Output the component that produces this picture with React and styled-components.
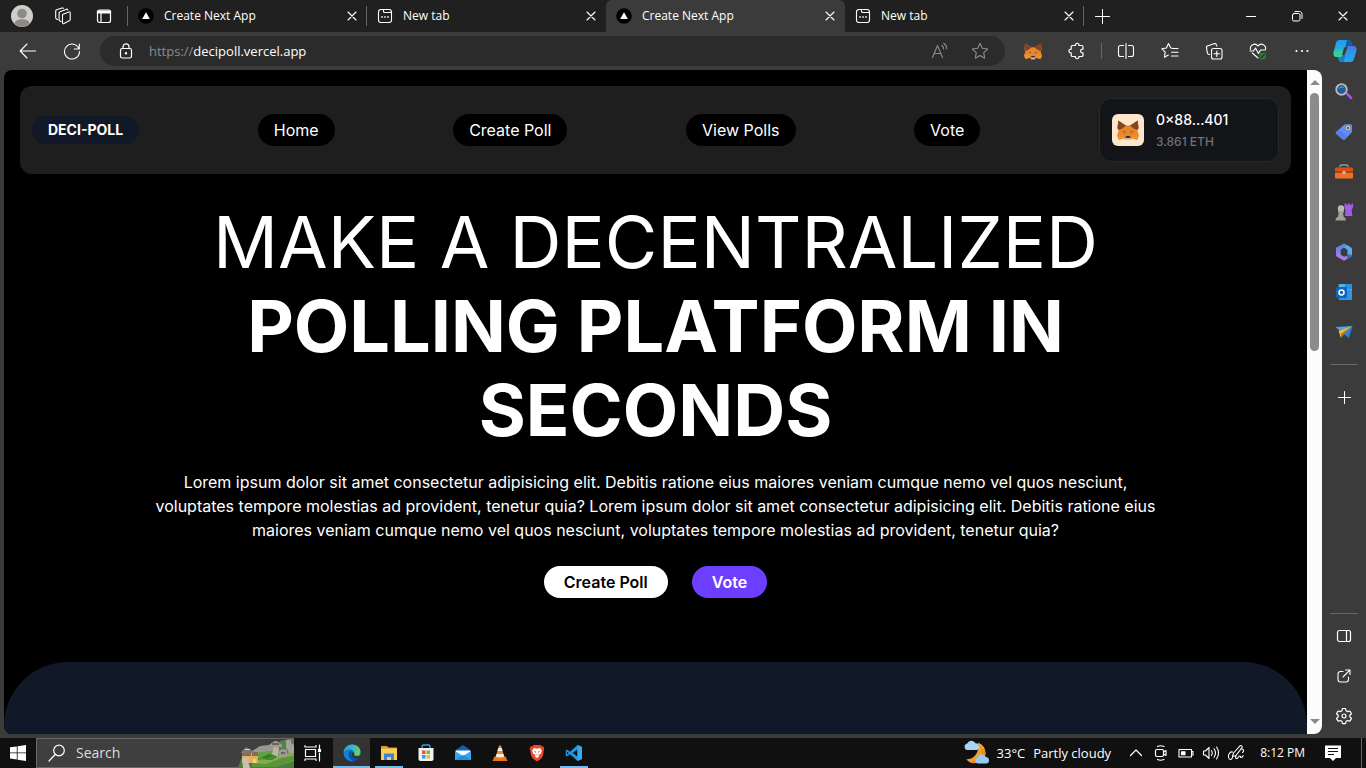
import React, { useState } from 'react';
import styled, { createGlobalStyle } from 'styled-components';

const GlobalStyle = createGlobalStyle`
  *, *::before, *::after {
    box-sizing: border-box;
  }
  body {
    margin: 0;
    background-color: #3b3b3b;
    font-family: 'Open Sans', 'Noto Sans', sans-serif;
    color: #ffffff;
  }
  button, input {
    font-family: inherit;
    color: inherit;
    border: none;
    padding: 0;
    background: none;
  }
  button {
    cursor: pointer;
  }
  a {
    color: inherit;
    text-decoration: none;
  }
  svg {
    display: block;
    flex: none;
  }
`;

/* ---------- icons ---------- */

const Line = ({ size = 16, width = 1, children }) => (
  <svg
    width={size}
    height={size}
    viewBox={`0 0 ${size} ${size}`}
    fill="none"
    stroke="currentColor"
    strokeWidth={width}
    strokeLinecap="round"
    strokeLinejoin="round"
    aria-hidden="true"
  >
    {children}
  </svg>
);

const Art = ({ size = 16, box = size, children }) => (
  <svg width={size} height={size} viewBox={`0 0 ${box} ${box}`} aria-hidden="true">
    {children}
  </svg>
);

const AvatarIcon = () => (
  <Art size={22}>
    <circle cx="11" cy="11" r="11" fill="#d0cecb" />
    <circle cx="11" cy="8.5" r="4.8" fill="#8c8987" />
    <path d="M3.5 18.5c.6-3 3.5-4.3 7.5-4.3s6.9 1.3 7.5 4.3A11 11 0 0 1 11 22a11 11 0 0 1-7.500-3.500z" fill="#8c8987" />
  </Art>
);

const WorkspacesIcon = () => (
  <Line size={18} width={1.1}>
    <path d="M8.500 7.400l6.300-2.500c.8-.3 1.400 0 1.400.9v6.700c0 .6-.3 1-.9 1.300l-5.300 2.800c-.8.400-1.500 0-1.500-.9z" />
    <path d="M7 14.600l-1.200-.6c-.5-.2-.7-.6-.7-1.200V5.900c0-.6.3-1 .9-1.200l6.500-2.500c.6-.2 1.100 0 1.300.7" />
    <path d="M3.600 12.500l-1.200-.6c-.5-.2-.7-.6-.7-1.200V3.900c0-.6.3-1 .9-1.200L8 .9c.6-.2 1.100 0 1.300.6" />
  </Line>
);

const TabActionsIcon = () => (
  <Line size={16} width={1.2}>
    <rect x="1.5" y="2" width="13" height="12.5" rx="2" />
    <path d="M1.500 3h13v2h-13z" fill="currentColor" />
    <path d="M5 5v9" />
  </Line>
);

const NextIcon = () => (
  <Art size={16}>
    <circle cx="8" cy="8" r="7.8" fill="#000" />
    <path d="M8 4.300l3.800 6.700H4.200z" fill="#fff" />
  </Art>
);

const NewTabIcon = () => (
  <Line size={16} width={1.1}>
    <rect x="1.500" y="1.500" width="13" height="13" rx="2.500" />
    <path d="M6.500 1.800v1.400c0 .8.500 1.300 1.300 1.300h6.500" />
    <path d="M4.200 9h1.600M7.200 9h1.600M10.200 9h1.600" strokeWidth="1.700" strokeLinecap="butt" />
  </Line>
);

const CloseIcon = () => (
  <Line size={10} width={1.1}>
    <path d="M1 1l8 8M9 1l-8 8" />
  </Line>
);

const PlusIcon = ({ size = 15 }) => (
  <Line size={size}>
    <path d={`M${size / 2} .5v${size - 1}M.5 ${size / 2}h${size - 1}`} />
  </Line>
);

const BackIcon = () => (
  <Line size={18} width={1.1}>
    <path d="M16.500 9H1.500M8 2L1.200 9 8 16" />
  </Line>
);

const RefreshIcon = () => (
  <Line size={18} width={1.1}>
    <path d="M16 6.800A7.500 7.500 0 1 0 16.500 9.500M16.300 2v5h-5" />
  </Line>
);

const LockIcon = () => (
  <Line size={16} width={1.2}>
    <rect x="2.500" y="5.500" width="11" height="9.500" rx="1.800" />
    <path d="M5 5.500V3.800a3 3 0 0 1 6 0v1.700" />
    <circle cx="8" cy="10.300" r=".6" fill="currentColor" />
  </Line>
);

const ReadAloudIcon = () => (
  <Line size={18} width={1.1}>
    <path d="M1.500 15.500l5-12 5 12M3.300 11.500h6.400" />
    <path d="M10.800 3.500c1.200.9 1.900 2 1.900 3.500M12.700 1.300c1.900 1.300 3 3.200 3 5.500" />
  </Line>
);

const StarIcon = () => (
  <Line size={18} width={1.1}>
    <path d="M9 1.300l2.300 5 5.400.7-4 3.700 1 5.500L9 13.600l-4.700 2.600 1-5.500-4-3.700 5.400-.7z" />
  </Line>
);

const FavoritesIcon = () => (
  <Line size={18} width={1.1}>
    <path d="M11 6.200L9.800 6 7.500 1.500 5.400 6l-4.600.7 3.400 3.400-.8 5.200 4-2.300" />
    <path d="M11.500 6.500H17M10.500 10.200H17M10.500 14H17" />
  </Line>
);

const FoxIcon = ({ size = 18 }) => (
  <Art size={size} box={24}>
    <path d="M1.500 1.500L9.500 7h5l8-5.500 1 8.500-1.300 3L24 18l-2 4.500-6-1.500-1.500 2h-5L8 21l-6 1.500L0 18l1.800-5L.500 10z" fill="#e8862c" />
    <path d="M1.500 1.500L10 7.300 5.500 10.500 1.800 12 .400 9.500zM22.500 1.500L14 7.300l4.500 3.200 3.700 1.500 1.400-2.500z" fill="#854520" />
    <path d="M5.500 13.300l4 .2-.8 1.600zM18.500 13.300l-4 .2.800 1.600z" fill="#6b4a38" />
    <path d="M0 18l7-.5L8 21l-6 1.500zM24 18l-7-.5-1 3.500 6 1.500z" fill="#f3912c" />
    <path d="M9 20h6l-.6 3H9.600z" fill="#cfc4ba" />
    <path d="M9.800 18.600h4.400l.4 2.200H9.400z" fill="#2d2f38" />
  </Art>
);

const PuzzleIcon = () => (
  <Line size={18} width={1.2}>
    <path d="M4.500 3.500H7.500c-.6-3 4-3 3.400 0h2.800c.8 0 1.300.5 1.300 1.300v2.400c-3.300-.4-3.300 4 0 3.600v2.400c0 .8-.5 1.300-1.300 1.300h-2.800c.6 3-4 3-3.400 0h-3c-.8 0-1.300-.5-1.300-1.300v-2.400c-3 .300-3-3.900 0-3.600V4.800c0-.8.5-1.300 1.300-1.300z" />
  </Line>
);

const SplitIcon = () => (
  <Line size={18} width={1.1}>
    <path d="M9 1.500v15M6.500 3.500H3.500c-1.100 0-2 .9-2 2v7c0 1.100.9 2 2 2h3M11.500 3.500h3c1.100 0 2 .9 2 2v7c0 1.100-.9 2-2 2h-3" />
  </Line>
);

const CollectionsIcon = () => (
  <Line size={18} width={1.1}>
    <rect x="6.500" y="6.500" width="10.500" height="10.500" rx="2" />
    <path d="M11.800 9v5.500M9 11.800h5.500" />
    <path d="M4.500 12.500l-1-.3c-.8-.2-1.200-.8-1.200-1.600l-.8-5c-.2-.9.200-1.500 1-1.700l7-2.300c.9-.2 1.500.1 1.700.9l.6 1.500" />
  </Line>
);

const HealthIcon = () => (
  <Line size={18} width={1.1}>
    <path d="M1.500 7.500C.5 3 6 .2 9 4c3-3.800 8.500-1 7.500 3.500M3.300 11l5.700 5M1 9h3.500l2-3 3 5.500 2-3.500H16" />
    <rect x="10.500" y="11" width="6.500" height="6.500" rx="2" fill="#2b7a35" stroke="none" />
    <path d="M12.300 15.500l3-2.800" stroke="#123c18" />
  </Line>
);

const MoreIcon = () => (
  <Art size={16}>
    <g fill="#fff">
      <circle cx="2.5" cy="8" r="1.1" />
      <circle cx="8" cy="8" r="1.1" />
      <circle cx="13.5" cy="8" r="1.1" />
    </g>
  </Art>
);

const CopilotIcon = () => (
  <Art size={24}>
    <defs>
      <linearGradient id="cpLeft" x1="0" y1="0" x2="0" y2="1">
        <stop offset="0" stopColor="#1e9bea" />
        <stop offset=".45" stopColor="#25a9e8" />
        <stop offset=".75" stopColor="#35cfa0" />
        <stop offset="1" stopColor="#35d08b" />
      </linearGradient>
      <linearGradient id="cpRight" x1="0" y1="0" x2="0" y2="1">
        <stop offset="0" stopColor="#4a73e8" />
        <stop offset=".4" stopColor="#2f95ec" />
        <stop offset="1" stopColor="#22a7ee" />
      </linearGradient>
    </defs>
    <path d="M6.500 1h9c2 0 2.600 1.300 3.200 3.500L19.300 7H13L9 18H3.500C.8 18 0 15.500.6 13L3 4c.6-2 1.600-3 3.500-3z" fill="url(#cpLeft)" />
    <path d="M14 1h1.500c2 0 2.600 1.300 3.200 3.500L19.300 7H12.500z" fill="#075ea8" />
    <path d="M17.500 23h-9c-2 0-2.600-1.300-3.200-3.500L4.700 18H10l4.500-11h6c2.700 0 3.500 2.500 2.900 5L21 20c-.6 2-1.600 3-3.500 3z" fill="url(#cpRight)" />
    <path d="M4.700 18H10l1.500-4 1 3-2 6h-2c-2 0-2.600-1.300-3.200-3.500z" fill="#1180d0" />
    <path d="M11 8.500h3.500L11.500 16H9.200z" fill="#3b3b3b" />
  </Art>
);

const MinimizeIcon = () => (
  <Line size={10}>
    <path d="M0 5.500h10" />
  </Line>
);

const RestoreIcon = () => (
  <Line size={12}>
    <rect x="1.500" y="3.500" width="7.500" height="7.500" rx="1.500" />
    <path d="M4 1.500h4.500c1.400 0 2.500 1.100 2.500 2.500v4.500" />
  </Line>
);

const SearchArt = () => (
  <Art size={18}>
    <path d="M10.800 11.200l1.600-1.600 4.800 4.700c.8.800-.8 2.700-1.800 1.800z" fill="#a855f0" />
    <circle cx="6.500" cy="6.500" r="5.300" fill="#225d96" stroke="#b9b9b9" strokeWidth="1.800" />
    <path d="M4 5.500c1-1.500 3-1.800 4.500-1" stroke="#6ea8da" fill="none" />
  </Art>
);

const TagArt = () => (
  <Art size={18}>
    <path d="M9.500 1.500l5.500-.5c1.200 0 2 .8 2 2v6l-7 7.400c-.7.700-1.600.7-2.300 0L1.200 11c-.7-.7-.7-1.600 0-2.300z" fill="#5f8df5" />
    <path d="M1.200 11l6.500 5.400c.7.700 1.600.7 2.300 0L12 14 4 7z" fill="#4c70e6" opacity=".5" />
    <circle cx="13" cy="5" r="1.700" fill="#454a60" stroke="#f3c04a" strokeWidth="1.200" />
  </Art>
);

const ToolboxArt = () => (
  <Art size={18}>
    <path d="M5 4.500V3.300c0-.8.500-1.300 1.300-1.300h5.400c.8 0 1.300.5 1.300 1.300v1.200" fill="none" stroke="#9a9a9a" strokeWidth="1.300" />
    <rect x="0" y="4.500" width="18" height="4.500" rx="1" fill="#d9520c" />
    <rect x="0" y="9" width="18" height="6.500" rx="1" fill="#f0702a" />
    <rect x="0" y="8.500" width="18" height="1.200" fill="#8f3608" />
    <circle cx="9" cy="9.500" r="1.800" fill="#bdbdbd" />
  </Art>
);

const GamesArt = () => (
  <Art size={20}>
    <path d="M10.500 1.500h2V3H14V1.500h2V3h1.500V1.500H19v4.500l-1.500 1.500.8 6.500H11l.5-6.500-1-1.500z" fill="#a45be8" />
    <circle cx="7" cy="6.500" r="3.200" fill="#bcb9b5" />
    <path d="M4 9h6v1.500H8.900l.9 4.500c1.200.4 2 1.300 2 3.500H1.500c0-2.200.8-3.100 2.300-3.500l1-4.500H4z" fill="#a3a09c" />
  </Art>
);

const OfficeArt = () => (
  <Art size={18}>
    <path d="M9 .5l3.500 1.800V6L9 4.500 5.500 7v4.500L2 13.500 1 12V6c0-.8.300-1.300 1-1.700z" fill="#5a8be4" />
    <path d="M1 12c0 .8.300 1.300 1 1.700L8 17.200c.7.400 1.300.4 2 0l2.500-1.500-1-3L9 13.800l-3.500-2.300L3 8.500z" fill="#a67ce6" />
    <path d="M12.500 2.300L16 4.400c.7.400 1 .9 1 1.700v6c0 .8-.3 1.300-1 1.700l-3.500 2V7L9 4.500z" fill="#57aeea" />
    <path d="M12.500 11v4.700L16 13.600c.7-.4 1-.9 1-1.700z" fill="#2c6ec4" />
    <path d="M1 6c0-.8.300-1.300 1-1.700l3.500 2.500v4.700L1 9z" fill="#8d7be0" />
  </Art>
);

const OutlookArt = () => (
  <Art size={18}>
    <rect x="3.500" y="1" width="13.500" height="8" rx="1" fill="#53b1ee" />
    <rect x="10" y="1" width="7" height="5" fill="#2a90dd" />
    <path d="M3 8.500L17 6.500V16c0 .6-.4 1-1 1H4z" fill="#2f95e4" />
    <rect x="1" y="4" width="11" height="11" rx="1.500" fill="#0a67bd" />
    <circle cx="6.5" cy="9.500" r="2.500" fill="none" stroke="#fff" strokeWidth="1.500" />
  </Art>
);

const DropArt = () => (
  <Art size={18}>
    <path d="M.5 4L17.500 3 7.500 10z" fill="#45a4ea" />
    <path d="M7.500 10l10-7-3.500 12z" fill="#2583d8" />
    <path d="M3.500 8l14-5L6 11v4z" fill="#f6b73c" />
    <path d="M6 11l11.500-8L8.500 12 6 15z" fill="#b97a22" />
  </Art>
);

const PanelIcon = () => (
  <Line size={16} width={1.2}>
    <rect x="1.500" y="2.500" width="13" height="11" rx="2" />
    <path d="M10.500 2.500v11" />
  </Line>
);

const ExternalIcon = () => (
  <Line size={16} width={1.1}>
    <path d="M7 3.500H4.500C3 3.500 2 4.500 2 6v5.500C2 13 3 14 4.500 14H10c1.500 0 2.500-1 2.500-2.500V9M9.500 2H14v4.500M13.800 2.200L7 9" />
  </Line>
);

const GearIcon = () => (
  <Line size={18} width={1.2}>
    <path d="M7.500 1.500h3l.6 2.300 1.500.8 2.300-.6 1.600 2.700-1.700 1.600v1.500l1.700 1.600-1.600 2.700-2.300-.6-1.500.8-.6 2.300h-3l-.6-2.300-1.500-.8-2.300.6-1.600-2.700 1.700-1.600V8.300L1.500 6.700 3.100 4l2.300.6 1.500-.8z" />
    <circle cx="9" cy="9" r="2" />
  </Line>
);

const WindowsIcon = () => (
  <Art size={16}>
    <path d="M0 2.300L6.800 1.400v6.100H0zM7.600 1.300L16 0v7.500H7.600zM0 8.300h6.800v6.200L0 13.600zM7.600 8.300H16V16l-8.400-1.300z" fill="#fff" />
  </Art>
);

const LoupeIcon = () => (
  <Line size={18} width={1.2}>
    <circle cx="11" cy="6.500" r="5.300" />
    <path d="M7.200 10.500L1 17" />
  </Line>
);

const GreatWallArt = () => (
  <svg width="56" height="29" viewBox="0 0 56 29" aria-hidden="true">
    <path d="M0 29l3-9 7-7 10-2 12-3 10-5 14-3v29z" fill="#4d7d3c" />
    <path d="M14 12l8-5 9-1 6-4 5 2v6l-12 3-14 3z" fill="#9a9790" />
    <path d="M42 2l8-2h6v12l-8 4-8-4z" fill="#55824a" />
    <path d="M18 14l12-2 12 1-8 6-12 3z" fill="#5fa33c" />
    <path d="M20 21l14 0 10-6 12-2v9l-16 5H16z" fill="#7fae4a" />
    <path d="M14 24l14 1 16-6 12-2v4L38 28H14z" fill="#5c9438" />
    <path d="M36 7l-2 8 6 3 1-9z" fill="#bdb5a4" />
    <path d="M48 1h5v3l3 2v8h-5l-3-6z" fill="#a8a299" />
    <path d="M4 14h16v10H4z" fill="#e2b166" />
    <path d="M4 14h9v3H4zM14 13h6v4h-6z" fill="#8d6a4a" />
    <path d="M3 13l5-5 7 4v2H3z" fill="#7d756e" />
    <path d="M32 6c2-3 5-4 7-4l5 4v2H32zM41 12c2-2 6-2 8-1v7h-8z" fill="#a09a91" />
    <path d="M34 4h7v2h-7zM43 13h4v2h-4z" fill="#6d655d" />
    <path d="M4 18h5l3 11H5z" fill="#c6bfb2" />
    <path d="M15 20h3v4h-3zM7 10h5v1H7z" fill="#f5cf85" />
    <path d="M22 19l9-4 6 2-8 3z" fill="#3d7a2d" />
  </svg>
);

const TaskViewIcon = () => (
  <Line size={18} width={1.2}>
    <path d="M1 1.500V3h11V1.500M1 16.500V15h11v1.500M1.500 5.500h10v7h-10zM15.500 1v4M15.500 9v8" />
    <rect x="14.500" y="5.500" width="2" height="2" fill="currentColor" />
  </Line>
);

const EdgeArt = () => (
  <Art size={18}>
    <defs>
      <linearGradient id="edgeTop" x1="0" y1="0" x2="1" y2=".4">
        <stop offset="0" stopColor="#1b9de2" />
        <stop offset=".5" stopColor="#37b6c8" />
        <stop offset="1" stopColor="#63cf68" />
      </linearGradient>
    </defs>
    <circle cx="9" cy="9" r="8.500" fill="#1480d2" />
    <path d="M.6 8.500C1 3.500 4.600.5 9 .5c5 0 8.500 3.500 8.500 7.300 0 2.400-1.700 3.900-4 3.900-1.900 0-2.900-.8-2.500-1.800.8-2-.7-4.600-4.200-4.600-2.800 0-5.100 1.300-6.200 3.200z" fill="url(#edgeTop)" />
    <path d="M6.800 7C4.500 10 6 16 11 17.200c2.500-.5 4.500-1.900 5.600-4-3 1.600-7.900.6-8.200-2.900-.1-1.400.3-2.300 1-2.800-.6-.8-1.600-1-2.600-.5z" fill="#0c4f9c" />
    <path d="M9.800 8.200c1.400-.2 2 1 1.300 2-.4 1 .6 1.700 2.200 1.700l4 .3-.8 1.600c-2.500 1-7.500.6-7.900-3.600 0-1 .5-1.800 1.200-2z" fill="#333" />
  </Art>
);

const FolderArt = () => (
  <Art size={18}>
    <path d="M1 2h6l1.500 1.500H17V8H1z" fill="#d99c1e" />
    <path d="M1 4.500h16V16H1z" fill="#fbcd52" />
    <path d="M4 9.500h10V16h-3v-3H7v3H4z" fill="#3b86d1" />
  </Art>
);

const StoreArt = () => (
  <Art size={18}>
    <path d="M5 4V2.500C5 1.600 5.600 1 6.500 1h5c.9 0 1.500.6 1.500 1.500V4" fill="none" stroke="#2fa3e8" strokeWidth="1.400" />
    <path d="M1.500 4h15v11c0 1.200-.8 2-2 2h-11c-1.200 0-2-.8-2-2z" fill="#f1f1f1" />
    <path d="M5 6.500h3.500V10H5z" fill="#ef5a2a" />
    <path d="M9.500 6.500H13V10H9.500z" fill="#7fb928" />
    <path d="M5 11h3.500v3.500H5z" fill="#2a9fe8" />
    <path d="M9.500 11H13v3.500H9.500z" fill="#f9b81b" />
  </Art>
);

const MailArt = () => (
  <Art size={18}>
    <path d="M1 6.500l8-5.500 8 5.500V9H1z" fill="#1360ad" />
    <path d="M2 6.500h14v3L9 13 2 9.500z" fill="#fff" />
    <path d="M1 7l8 5 8-5v9H1z" fill="#2fa8f0" />
    <path d="M1 16l8-5 8 5z" fill="#1f8fe0" />
  </Art>
);

const VlcArt = () => (
  <Art size={18}>
    <path d="M3.500 12.500h11L16.500 17h-15z" fill="#e87817" />
    <path d="M8 1.500h2l3.500 12c-2 1.500-7 1.500-9 0z" fill="#f08a24" />
    <path d="M7.300 4h3.400l.9 3H6.400zM5.500 10h7l.7 2.500c-2 1.200-6.400 1.200-8.400 0z" fill="#ececec" />
  </Art>
);

const BraveArt = () => (
  <Art size={18}>
    <path d="M5.500 1h7l1.500 1.500h1.500L16.300 5l-.6 1.200c0 4-1.200 7-3.200 8.800L9 17.500 5.500 15c-2-1.800-3.200-4.800-3.200-8.800L1.700 5l.8-2.500H4z" fill="#f0492a" />
    <path d="M6 4l3 .7L12 4l1.800 2.500-.8 3-2.500 1.500.5 1.500L9 14l-2-1.500.5-1.500L5 9.500l-.8-3z" fill="#fff" />
    <path d="M5.800 7l2.200.6-.4 1.300zM12.200 7l-2.200.6.4 1.300zM8.200 10.500h1.600L9 11.800z" fill="#f0492a" />
  </Art>
);

const VsCodeArt = () => (
  <Art size={18}>
    <path d="M12.500 1L17 3v12l-4.500 2L5 10.200 2 12.500.8 11.700V6.300L2 5.500l3 2.300zM12.500 5.500L7.700 9l4.800 3.500zM2 7.500v3L3.600 9z" fill="#1f94e0" fillRule="evenodd" />
    <path d="M12.500 1L17 3v12l-4.500 2z" fill="#35a9f2" />
  </Art>
);

const WeatherArt = () => (
  <Art size={26}>
    <path d="M15 2.500A12 12 0 0 1 22.500 14 11 11 0 0 1 3 19c7 1.500 14-6 12-16.500z" fill="#f2a02c" />
    <path d="M18 8c2 6-3 13-12 13.500A11 11 0 0 0 22.500 14c.3-2-1-4.500-4.500-6z" fill="#ee8a20" />
    <path d="M4.500 10a3.300 3.300 0 0 1-.3-6.500 4.500 4.500 0 0 1 8.300-.2 3.400 3.400 0 0 1 1 6.700z" fill="#a9d4f5" />
    <path d="M15 23.500a3.200 3.200 0 0 1-.3-6.300 4.400 4.400 0 0 1 8.200-.2 3.300 3.300 0 0 1 .6 6.500z" fill="#98c9f1" />
  </Art>
);

const ChevronIcon = () => (
  <Line size={14} width={1.2}>
    <path d="M1.500 9.500L7 4l5.500 5.500" />
  </Line>
);

const MeetIcon = () => (
  <Line size={16} width={1.2}>
    <rect x="2.500" y="4.500" width="8" height="7" rx="1.500" />
    <path d="M10.500 7l2.500-1.500v5L10.500 9M4.500 1.500C6 .7 9 .7 11 1.500M4.500 14.500c1.500.8 4.500.8 6.500 0" />
  </Line>
);

const BatteryIcon = () => (
  <Line size={16} width={1.1}>
    <path d="M1 4.500h12.500v7.500H1zM13.500 6.500H15V10h-1.500" />
    <path d="M3.500 6.800H7V9.800H3.500z" fill="currentColor" />
  </Line>
);

const SpeakerIcon = () => (
  <Line size={18} width={1.1}>
    <path d="M1.500 7h2L7 3.500v11L3.500 11h-2zM9.500 6.500c1 1.500 1 3.500 0 5M12 4.800c1.800 2.500 1.800 5.900 0 8.400M14.500 3c2.700 3.500 2.700 8.500 0 12" />
  </Line>
);

const PenIcon = () => (
  <Line size={18} width={1.1}>
    <path d="M5.500 12.500l1-3.500L13 1.800c1-.8 2.700.6 2 1.800L9 11.500l-3.500 1zM5.500 8c-2-.5-4.500 2-4 5s3 3.500 4 .5M9 12c-1.500 3 1 3.500 2.500 1 1-1.800 2-1 2 .2 1 .5 2-.2 2.700-1.500M15 5c2 0 2 2 .5 3.500" />
  </Line>
);

const NoticeIcon = () => (
  <Art size={18}>
    <path d="M1 1.500h16v12.500h-5L9 17l-3-3H1z" fill="#fff" />
    <path d="M4 4.500h10M4 7.500h10M4 10.500h6" stroke="#101010" />
  </Art>
);

/* ---------- data ---------- */

const tabs = [
  { title: 'Create Next App', icon: NextIcon },
  { title: 'New tab', icon: NewTabIcon },
  { title: 'Create Next App', icon: NextIcon },
  { title: 'New tab', icon: NewTabIcon },
];

const toolbarItems = [
  { name: 'Split screen', icon: SplitIcon },
  { name: 'Favorites', icon: FavoritesIcon },
  { name: 'Collections', icon: CollectionsIcon },
  { name: 'Browser essentials', icon: HealthIcon },
  { name: 'Settings and more', icon: MoreIcon },
];

const sidebarItems = [
  { name: 'Search sidebar', icon: SearchArt },
  { name: 'Shopping', icon: TagArt },
  { name: 'Tools', icon: ToolboxArt },
  { name: 'Games', icon: GamesArt },
  { name: 'Microsoft 365', icon: OfficeArt },
  { name: 'Outlook', icon: OutlookArt },
  { name: 'Drop', icon: DropArt },
];

const sidebarFooter = [
  { name: 'Hide sidebar', icon: PanelIcon },
  { name: 'Open in window', icon: ExternalIcon },
  { name: 'Settings', icon: GearIcon },
];

const navLinks = ['Home', 'Create Poll', 'View Polls', 'Vote'];

const taskbarApps = [
  { name: 'Edge', icon: EdgeArt, active: true, open: true },
  { name: 'File Explorer', icon: FolderArt, open: true },
  { name: 'Store', icon: StoreArt },
  { name: 'Mail', icon: MailArt },
  { name: 'VLC', icon: VlcArt },
  { name: 'Brave', icon: BraveArt },
  { name: 'VS Code', icon: VsCodeArt, open: true },
];

const trayItems = [
  { name: 'Show hidden icons', icon: ChevronIcon },
  { name: 'Meet now', icon: MeetIcon },
  { name: 'Battery', icon: BatteryIcon },
  { name: 'Volume', icon: SpeakerIcon },
  { name: 'Ink workspace', icon: PenIcon },
];

/* ---------- app ---------- */

function App() {
  const [activeTab, setActiveTab] = useState(2);
  const [url, setUrl] = useState('decipoll.vercel.app');

  return (
    <Window>
      <GlobalStyle />

      {/* tab strip */}
      <TabStrip>
        <StripActions>
          <StripButton aria-label="Profile"><AvatarIcon /></StripButton>
          <StripButton aria-label="Workspaces"><WorkspacesIcon /></StripButton>
          <StripButton aria-label="Tab actions"><TabActionsIcon /></StripButton>
        </StripActions>
        {tabs.map(({ title, icon: Icon }, idx) => (
          <Tab key={idx} $active={idx === activeTab} $divider={idx !== activeTab && idx + 1 !== activeTab}>
            <TabButton onClick={() => setActiveTab(idx)}>
              <Icon />
              <span>{title}</span>
            </TabButton>
            <TabClose aria-label="Close tab"><CloseIcon /></TabClose>
          </Tab>
        ))}
        <IconButton $width={36} aria-label="Open new tab"><PlusIcon /></IconButton>
        <WindowControls>
          <IconButton $width={46} aria-label="Minimize"><MinimizeIcon /></IconButton>
          <IconButton $width={46} aria-label="Restore"><RestoreIcon /></IconButton>
          <IconButton $width={46} aria-label="Close"><CloseIcon /></IconButton>
        </WindowControls>
      </TabStrip>

      {/* toolbar */}
      <Toolbar>
        <ToolbarStart>
          <IconButton $width={44} aria-label="Back"><BackIcon /></IconButton>
          <IconButton $width={44} aria-label="Refresh"><RefreshIcon /></IconButton>
        </ToolbarStart>
        <AddressBar>
          <LockIcon />
          <UrlLabel>
            <span>https://</span>
            <UrlInput aria-label="Address" value={url} onChange={(e) => setUrl(e.target.value)} />
          </UrlLabel>
          <IconButton $width={40} $muted aria-label="Read aloud"><ReadAloudIcon /></IconButton>
          <IconButton $width={40} $muted aria-label="Add to favorites"><StarIcon /></IconButton>
        </AddressBar>
        <IconButton $width={44} aria-label="MetaMask"><FoxIcon /></IconButton>
        <IconButton $width={44} aria-label="Extensions"><PuzzleIcon /></IconButton>
        <ToolbarDivider />
        {toolbarItems.map(({ name, icon: Icon }) => (
          <IconButton key={name} $width={44} aria-label={name}><Icon /></IconButton>
        ))}
        <IconButton $width={42} aria-label="Copilot"><CopilotIcon /></IconButton>
      </Toolbar>

      <Body>
        <Frame>
          <Page>
            {/* header */}
            <Nav>
              <Brand href="#home">DECI-POLL</Brand>
              {navLinks.map((link) => (
                <NavLink key={link} href="#page">{link}</NavLink>
              ))}
              <Wallet>
                <WalletIcon><FoxIcon size={22} /></WalletIcon>
                <WalletText>
                  <WalletAddress>0×88...401</WalletAddress>
                  <WalletBalance>3.861 ETH</WalletBalance>
                </WalletText>
              </Wallet>
            </Nav>

            {/* hero */}
            <Hero>
              <Title>
                <span>MAKE A DECENTRALIZED</span> POLLING PLATFORM IN SECONDS
              </Title>
              <Intro>
                Lorem ipsum dolor sit amet consectetur adipisicing elit. Debitis ratione eius maiores
                veniam cumque nemo vel quos nesciunt, voluptates tempore molestias ad provident, tenetur
                quia? Lorem ipsum dolor sit amet consectetur adipisicing elit. Debitis ratione eius
                maiores veniam cumque nemo vel quos nesciunt, voluptates tempore molestias ad provident,
                tenetur quia?
              </Intro>
              <Actions>
                <ActionButton>Create Poll</ActionButton>
                <ActionButton $primary>Vote</ActionButton>
              </Actions>
            </Hero>
            <Panel />
          </Page>
          <Scrollbar>
            <Arrow />
            <Thumb />
            <Arrow $down />
          </Scrollbar>
        </Frame>

        {/* browser sidebar */}
        <Sidebar>
          {sidebarItems.map(({ name, icon: Icon }) => (
            <SideButton key={name} aria-label={name}><Icon /></SideButton>
          ))}
          <SideDivider />
          <SideButton aria-label="Customize"><PlusIcon size={13} /></SideButton>
          <SideFooter>
            <SideRule />
            {sidebarFooter.map(({ name, icon: Icon }) => (
              <SideButton key={name} aria-label={name}><Icon /></SideButton>
            ))}
          </SideFooter>
        </Sidebar>
      </Body>

      {/* taskbar */}
      <Taskbar>
        <IconButton $width={36} aria-label="Start"><WindowsIcon /></IconButton>
        <SearchBox>
          <LoupeIcon />
          <SearchInput aria-label="Search" placeholder="Search" />
          <GreatWallArt />
        </SearchBox>
        <AppButton aria-label="Task view"><TaskViewIcon /></AppButton>
        <Apps>
          {taskbarApps.map(({ name, icon: Icon, active, open }) => (
            <AppButton key={name} aria-label={name} $active={active} $open={open}><Icon /></AppButton>
          ))}
        </Apps>
        <Tray>
          <Weather>
            <WeatherArt />
            <span>33°C</span>
            <span>Partly cloudy</span>
          </Weather>
          {trayItems.map(({ name, icon: Icon }) => (
            <IconButton key={name} $width={25} aria-label={name}><Icon /></IconButton>
          ))}
          <Clock>8:12 PM</Clock>
          <IconButton $width={56} aria-label="Notifications"><NoticeIcon /></IconButton>
        </Tray>
      </Taskbar>
    </Window>
  );
}

const Window = styled.div`
  display: flex;
  flex-direction: column;
  height: 100vh;
  overflow: hidden;
  background-color: #3b3b3b;
`;

const IconButton = styled.button`
  display: flex;
  flex: none;
  align-items: center;
  justify-content: center;
  width: ${(props) => props.$width}px;
  height: 100%;
  color: ${(props) => (props.$muted ? '#8c8c8c' : '#ffffff')};
`;

//tab strip
const TabStrip = styled.div`
  display: flex;
  flex: none;
  height: 32px;
  background-color: #202020;
`;

const StripActions = styled.div`
  display: flex;
  align-items: center;
  flex: none;
  width: 128px;
  padding-left: 1px;
  background: linear-gradient(#666666, #666666) right 6px / 1px 20px no-repeat;
`;

const StripButton = styled.button`
  display: flex;
  align-items: center;
  justify-content: center;
  width: 41px;
  height: 32px;
`;

const Tab = styled.div`
  display: flex;
  align-items: center;
  flex: 0 1 239px;
  min-width: 0;
  padding: 0 5px 0 10px;
  border-radius: 6px 6px 0 0;
  background-color: ${(props) => (props.$active ? '#3b3b3b' : 'transparent')};
  background-image: ${(props) => (props.$divider ? 'linear-gradient(#666666, #666666)' : 'none')};
  background-repeat: no-repeat;
  background-size: 1px 20px;
  background-position: right 6px;
`;

const TabButton = styled.button`
  display: flex;
  align-items: center;
  gap: 10px;
  flex: 1;
  min-width: 0;
  height: 100%;
  font-size: 12px;
  line-height: 16px;
  white-space: nowrap;
  overflow: hidden;
`;

const TabClose = styled.button`
  display: flex;
  align-items: center;
  justify-content: center;
  width: 20px;
  height: 20px;
`;

const WindowControls = styled.div`
  display: flex;
  margin-left: auto;
`;

//toolbar
const Toolbar = styled.div`
  display: flex;
  align-items: center;
  flex: none;
  height: 38px;
`;

const ToolbarStart = styled.div`
  display: flex;
  height: 100%;
  padding: 0 6px;
`;

const AddressBar = styled.div`
  display: flex;
  align-items: center;
  flex: 1;
  height: 30px;
  margin-right: 6px;
  padding: 0 5px 0 18px;
  border-radius: 15px;
  background-color: #2b2b2b;
`;

const UrlLabel = styled.label`
  display: flex;
  align-items: center;
  flex: 1;
  margin-left: 15px;
  font-size: 13px;
  line-height: 20px;
  span {
    color: #8c8c8c;
  }
`;

const UrlInput = styled.input`
  flex: 1;
  min-width: 0;
  font-size: 13px;
  line-height: 20px;
  outline: none;
`;

const ToolbarDivider = styled.div`
  width: 1px;
  height: 16px;
  margin: 0 2px;
  background-color: #666666;
`;

//content
const Body = styled.div`
  display: flex;
  flex: 1;
  min-height: 0;
`;

const Frame = styled.div`
  display: flex;
  flex: 1;
  min-width: 0;
  margin: 0 0 4px 4px;
  border-radius: 8px;
  overflow: hidden;
  background-color: #000000;
`;

const Page = styled.main`
  flex: 1;
  min-width: 0;
  padding-top: 16px;
  overflow: hidden;
  font-family: 'Inter', sans-serif;
`;

const Nav = styled.nav`
  display: flex;
  align-items: center;
  justify-content: space-between;
  margin: 0 16px;
  padding: 12px;
  border-radius: 12px;
  background-color: #1e1e1e;
`;

const Brand = styled.a`
  padding: 4px 16px;
  border-radius: 14px;
  background-color: #111827;
  font-size: 14px;
  line-height: 20px;
  font-weight: 700;
`;

const NavLink = styled.a`
  padding: 4px 16px;
  border-radius: 16px;
  background-color: #000000;
  font-size: 16px;
  line-height: 24px;
`;

const Wallet = styled.div`
  display: flex;
  align-items: center;
  gap: 12px;
  width: 180px;
  height: 64px;
  padding: 0 12px;
  border: 1px solid #242830;
  border-radius: 12px;
  background-color: #131418;
`;

const WalletIcon = styled.div`
  display: flex;
  align-items: center;
  justify-content: center;
  width: 32px;
  height: 32px;
  border-radius: 6px;
  background-color: #fde6cb;
`;

const WalletText = styled.div`
  display: flex;
  flex-direction: column;
  gap: 4px;
`;

const WalletAddress = styled.span`
  font-size: 14px;
  line-height: 20px;
  font-weight: 500;
`;

const WalletBalance = styled.span`
  font-size: 12px;
  line-height: 16px;
  font-weight: 500;
  color: #6f7178;
`;

const Hero = styled.section`
  display: flex;
  flex-direction: column;
  align-items: center;
  padding: 26px 16px 64px;
  text-align: center;
`;

const Title = styled.h1`
  max-width: 1024px;
  margin: 0 0 18px;
  font-size: 72px;
  line-height: 84px;
  font-weight: 700;
  span {
    font-weight: 400;
  }
`;

const Intro = styled.p`
  max-width: 1024px;
  margin: 0 0 24px;
  font-size: 16px;
  line-height: 24px;
`;

const Actions = styled.div`
  display: flex;
  gap: 24px;
`;

const ActionButton = styled.button`
  height: 32px;
  padding: 0 20px;
  border-radius: 16px;
  background-color: ${(props) => (props.$primary ? '#6c3fff' : '#ffffff')};
  color: ${(props) => (props.$primary ? '#ffffff' : '#000000')};
  font-size: 16px;
  line-height: 24px;
  font-weight: 600;
`;

const Panel = styled.section`
  height: 400px;
  border-radius: 64px 64px 0 0;
  background-color: #111827;
`;

const Scrollbar = styled.div`
  display: flex;
  flex-direction: column;
  align-items: center;
  flex: none;
  width: 15px;
  padding: 10px 0;
  background-color: #fcfcfc;
`;

const Arrow = styled.div`
  border: 5px solid transparent;
  border-top: ${(props) => (props.$down ? '5px solid #8b8b8b' : 'none')};
  border-bottom: ${(props) => (props.$down ? 'none' : '5px solid #8b8b8b')};
  margin-top: ${(props) => (props.$down ? 'auto' : '0')};
`;

const Thumb = styled.div`
  width: 9px;
  height: 40%;
  margin-top: 8px;
  border-radius: 5px;
  background-color: #8b8b8b;
`;

//sidebar
const Sidebar = styled.aside`
  display: flex;
  flex-direction: column;
  align-items: center;
  flex: none;
  width: 44px;
  padding: 2px 0;
`;

const SideButton = styled.button`
  display: flex;
  align-items: center;
  justify-content: center;
  width: 40px;
  height: 40px;
`;

const SideRule = styled.div`
  width: 28px;
  height: 1px;
  margin: 0 auto 2px;
  background-color: #666666;
`;

const SideDivider = styled(SideRule)`
  margin: 12px auto;
`;

const SideFooter = styled.div`
  margin-top: auto;
`;

//taskbar
const Taskbar = styled.footer`
  display: flex;
  align-items: stretch;
  flex: none;
  height: 30px;
  background-color: #101010;
`;

const SearchBox = styled.label`
  display: flex;
  align-items: center;
  gap: 10px;
  width: 258px;
  padding-left: 11px;
  border: 1px solid #686868;
  border-right: none;
  background-color: #3f3f3f;
`;

const SearchInput = styled.input`
  flex: 1;
  min-width: 0;
  font-size: 14px;
  line-height: 20px;
  outline: none;
  &::placeholder {
    color: #dddddd;
    opacity: 1;
  }
`;

const Apps = styled.div`
  display: flex;
  margin-left: 2px;
`;

const AppButton = styled.button`
  display: flex;
  align-items: center;
  justify-content: center;
  width: 37px;
  background-color: ${(props) => (props.$active ? '#333333' : 'transparent')};
  background-image: ${(props) => (props.$open ? 'linear-gradient(#76b9ed, #76b9ed)' : 'none')};
  background-repeat: no-repeat;
  background-position: bottom center;
  background-size: ${(props) => (props.$active ? '100%' : '28px')} 2px;
`;

const Tray = styled.div`
  display: flex;
  align-items: center;
  margin-left: auto;
  margin-right: 4px;
  border-right: 1px solid #666666;
`;

const Weather = styled.button`
  display: flex;
  align-items: center;
  gap: 8px;
  height: 100%;
  margin-right: 12px;
  font-size: 13px;
  line-height: 20px;
  white-space: nowrap;
`;

const Clock = styled.time`
  margin-left: 12px;
  font-size: 12px;
  line-height: 16px;
  white-space: nowrap;
`;

export default App;
